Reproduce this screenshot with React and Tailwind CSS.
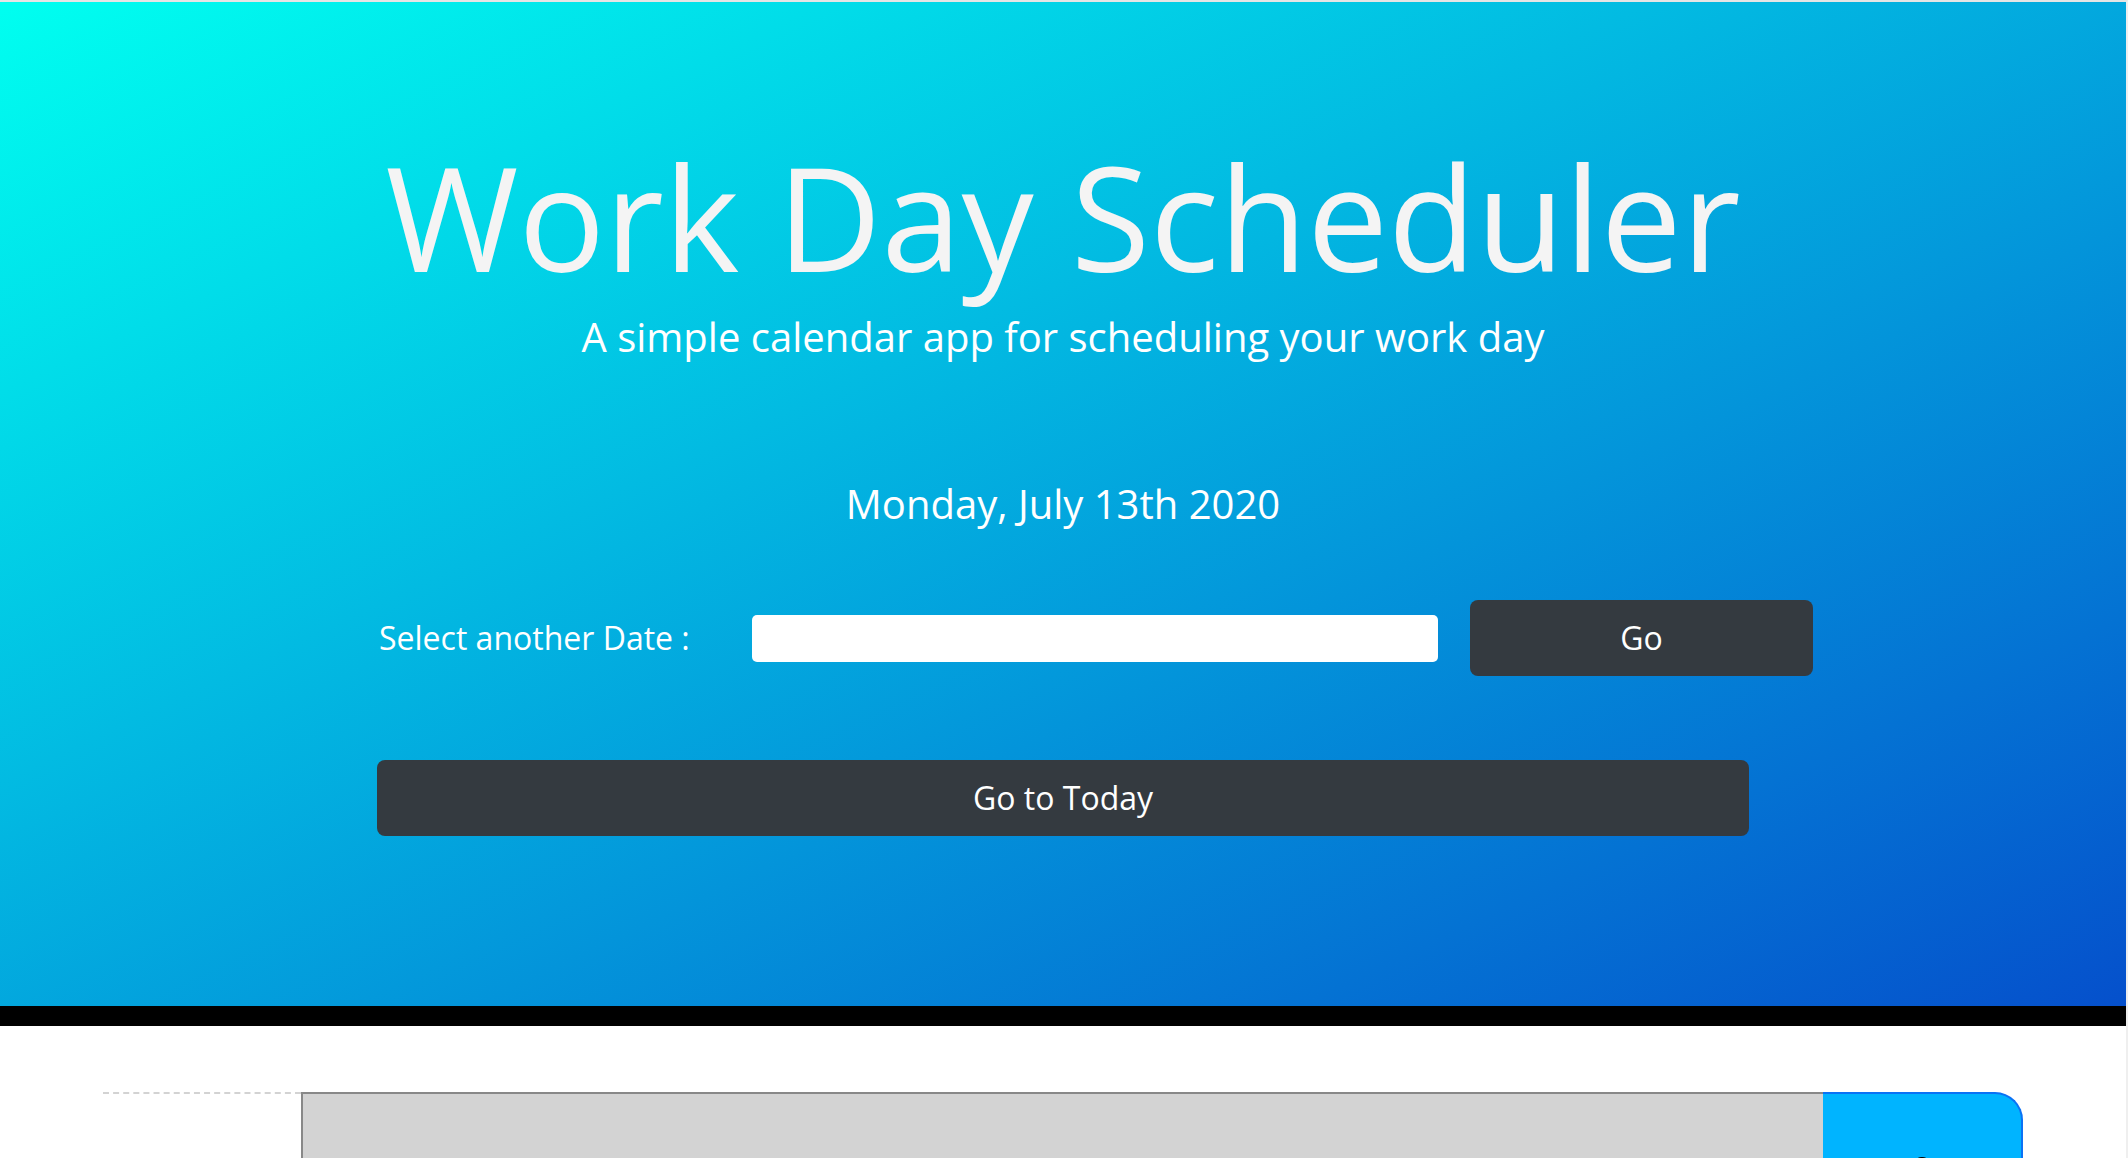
import React, { useState } from 'react';
import { FaLock } from 'react-icons/fa';

function Header({ today }) {
  const [picked, setPicked] = useState('');

  return (
    <header className="h-[1024px] border-b-[20px] border-black bg-[linear-gradient(to_bottom_right,#00fff0,#0550cc)] pt-[128px]">
      <h1 className="text-center text-[144px] leading-[173px] font-normal text-[#f4f4f4]">
        Work Day Scheduler
      </h1>
      <p className="mt-[4px] text-center text-[40px] leading-[60px] font-normal text-white">
        A simple calendar app for scheduling your work day
      </p>
      <p className="mt-[107px] text-center text-[40px] leading-[60px] text-white">
        {today}
      </p>

      {/* Date picker */}
      <div className="mt-[66px] flex h-[76px] items-center pl-[379px]">
        <label className="w-[373px] text-[32px] text-white">Select another Date :</label>
        <input
          type="text"
          value={picked}
          onChange={(e) => setPicked(e.target.value)}
          className="h-[47px] w-[686px] rounded-[5px] bg-white px-3 text-[28px] outline-none"
        />
        <button className="ml-[32px] h-[76px] w-[343px] rounded-[8px] bg-[#343a40] text-[32px] text-white">
          Go
        </button>
      </div>

      <button className="mt-[84px] ml-[377px] h-[76px] w-[1372px] rounded-[8px] bg-[#343a40] text-[32px] text-white">
        Go to Today
      </button>
    </header>
  );
}

function HourRow() {
  const [text, setText] = useState('');

  return (
    <div className="flex h-[162px] pl-[103px]">
      <div className="w-[198px] border-t-2 border-dashed border-[#d3d3d3]" />
      <textarea
        value={text}
        onChange={(e) => setText(e.target.value)}
        className="w-[1522px] resize-none border-t-2 border-l-2 border-[#888888] bg-[#d3d3d3] outline-none"
      />
      <button className="flex w-[200px] items-center justify-center rounded-tr-[28px] border-t-2 border-r-2 border-[#0a72f5] bg-[#00b4ff] text-black">
        <FaLock className="h-[34px] w-[30px]" />
      </button>
    </div>
  );
}

export default function App() {
  return (
    <div
      className="h-[1158px] overflow-hidden border-t-2 border-r-2 border-t-[#e5e5e5] border-r-[#efefef] bg-white"
      style={{ fontFamily: '"Open Sans", "Noto Sans", sans-serif' }}
    >
      <Header today="Monday, July 13th 2020" />
      <div className="mt-[66px]">
        <HourRow />
      </div>
    </div>
  );
}
